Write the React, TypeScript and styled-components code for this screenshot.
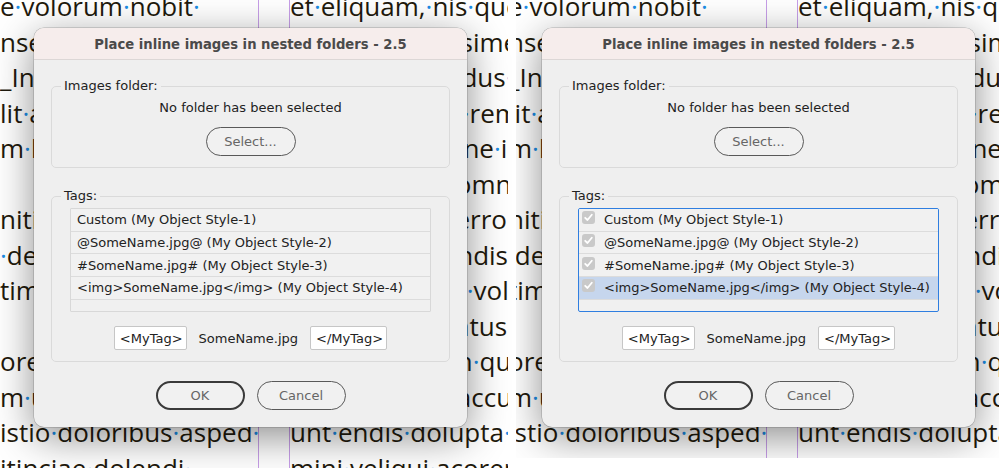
import React from "react";
import styled, { createGlobalStyle } from "styled-components";

const GlobalStyle = createGlobalStyle`
  html, body { margin: 0; padding: 0; background: #fff; }
  body { width: 999px; height: 468px; overflow: hidden; }
`;

// text of the InDesign page behind the dialog; "·" is the visible space marker
const LEFT_LINES = [
  "e·volorum·nobit·",
  "nsequi·dolor·sit·amet·quo",
  "_Intiam·quibus·est·aut",
  "lit·aut·verum·quatem",
  "m·hicium·fuga·nem·est",
  "",
  "niti_tatem·venit·aut",
  "·delenis·eos·magnam",
  "tim·quam·rerum·aut",
  "",
  "orepedi·omnis·etur",
  "m·ut·aut·volorem·sit",
  "istio·doloribus·asped·",
  "itinciae·dolendi·",
];

const RIGHT_LINES = [
  "et·eliquam,·nis·que·non",
  "ut·quatur·eos·simenis·aut",
  "aut·eatur·mol·dus·que",
  "nam·quis·dolo·rem·alit",
  "unsitatur·ipsa·ne·in·rem",
  "estio·dolupta·omnimus",
  "ipsum·quiam·erro·tem",
  "moles·et·vollendis·aut",
  "nimus·sit·quos·volor",
  "odios·omnis·ratus·et",
  "set·aut·quidem·quam·et",
  "nam·esto·tim·accum",
  "unt·endis·dolupta·tem",
  "mini·veliqui·acorem",
];

const TAGS = [
  "Custom (My Object Style-1)",
  "@SomeName.jpg@ (My Object Style-2)",
  "#SomeName.jpg# (My Object Style-3)",
  "<img>SomeName.jpg</img> (My Object Style-4)",
];

const Stage = styled.div`
  display: flex;
  align-items: flex-start;
  width: 999px;
  height: 468px;
  background: #fff;
  overflow: hidden;
`;

const Shot = styled.div<{ $w: number; $h: number }>`
  flex: 0 0 ${(p) => p.$w}px;
  height: ${(p) => p.$h}px;
  overflow: hidden;
`;

const Scene = styled.div<{ $shift: number }>`
  position: relative;
  width: 516px;
  height: 468px;
  margin-left: -${(p) => p.$shift}px;
  background: #fff;
`;

const DocPage = styled.div`
  display: flex;
  height: 100%;
  font-family: "Open Sans", "Noto Sans", sans-serif;
  font-size: 26px;
  line-height: 35.5px;
  color: #1f1a0d;
`;

const TextFrame = styled.div<{ $w: number }>`
  flex: 0 0 ${(p) => p.$w}px;
  overflow: hidden;
  white-space: pre;
`;

const Lines = styled.div`
  margin-top: -11px;
`;

const Line = styled.div`
  height: 35.5px;
`;

const Space = styled.span`
  color: #1b8de6;
`;

const Gutter = styled.div`
  flex: 0 0 32px;
  box-sizing: border-box;
  border-left: 1px solid #c79ee8;
  border-right: 1px solid #c79ee8;
`;

const Dialog = styled.div`
  position: absolute;
  left: 34px;
  top: 28px;
  width: 433px;
  height: 399px;
  box-sizing: border-box;
  display: flex;
  flex-direction: column;
  border-radius: 10px;
  overflow: hidden;
  background: #efefef;
  box-shadow: 0 0 0 0.5px rgba(0, 0, 0, 0.25), 0 10px 40px rgba(0, 0, 0, 0.45);
  font-family: "DejaVu Sans", Verdana, sans-serif;
  font-size: 13px;
  color: #222;
`;

const TitleBar = styled.div`
  flex: none;
  height: 32px;
  box-sizing: border-box;
  display: flex;
  align-items: center;
  justify-content: center;
  padding-top: 1px;
  background: #f6edec;
  border-bottom: 1px solid #dcd7d6;
  font-size: 13.2px;
  font-weight: 700;
  color: #4a4a4a;
`;

const Body = styled.div`
  display: flex;
  flex-direction: column;
  padding: 26px 17px 17px;
`;

const Group = styled.div<{ $gapTop?: number }>`
  position: relative;
  display: flex;
  flex-direction: column;
  align-items: center;
  padding: 11px 18px;
  margin-top: ${(p) => p.$gapTop ?? 0}px;
  border: 1px solid #dadada;
  border-radius: 5px;
`;

const GroupLabel = styled.div`
  position: absolute;
  top: -9px;
  left: 9px;
  padding: 0 3px;
  line-height: 16px;
  background: #efefef;
  color: #222;
`;

const Message = styled.div`
  line-height: 18px;
  margin-top: 1px;
  margin-bottom: 10px;
`;

const Pill = styled.button<{ $default?: boolean; $w?: number }>`
  width: ${(p) => p.$w ?? 89}px;
  height: 29px;
  box-sizing: border-box;
  border-radius: 15px;
  border: ${(p) => (p.$default ? "2.5px solid #3a3a3a" : "1.5px solid #595959")};
  background: #f1f1f1;
  font-family: inherit;
  font-size: 13px;
  color: #666;
  padding: 0;
`;

const TagList = styled.div<{ $focused: boolean }>`
  align-self: stretch;
  height: 104px;
  box-sizing: border-box;
  border: ${(p) => (p.$focused ? "1.5px solid #2f7ee0" : "1px solid #d8d8d8")};
  border-radius: ${(p) => (p.$focused ? 2 : 1)}px;
  background: #f0f0f0;
  overflow: hidden;
`;

const TagRow = styled.div<{ $selected: boolean; $checks: boolean }>`
  display: flex;
  align-items: center;
  gap: 9px;
  height: 22.7px;
  box-sizing: border-box;
  padding-left: ${(p) => (p.$checks ? 3 : 6)}px;
  border-bottom: 1px solid #dcdcdc;
  background: ${(p) => (p.$selected ? "#c6d6ed" : "#f1f1f1")};
  white-space: nowrap;
`;

const Check = styled.span`
  flex: none;
  display: flex;
  width: 13px;
  height: 13px;
  margin-bottom: 4px;
  border-radius: 3px;
  background: #c9c9c9;
`;

const TagPreview = styled.div`
  display: flex;
  align-items: center;
  gap: 12px;
  margin-top: 14px;
`;

const TagBox = styled.div`
  height: 24px;
  box-sizing: border-box;
  display: flex;
  align-items: center;
  padding: 0 3px 0 5px;
  background: #fff;
  border: 1px solid #c6c6c6;
  border-radius: 2px;
`;

const Buttons = styled.div`
  display: flex;
  justify-content: center;
  gap: 12px;
  margin-top: 19px;
`;

function marked(text: string) {
  return text.split("·").map((word, i) => (
    <React.Fragment key={i}>
      {i > 0 && <Space>·</Space>}
      {word}
    </React.Fragment>
  ));
}

function CheckMark() {
  return (
    <Check>
      <svg width="13" height="13" viewBox="0 0 13 13">
        <path d="M3.2 6.8 L5.5 9 L9.8 3.8" fill="none" stroke="#fff" strokeWidth="1.8" strokeLinecap="round" strokeLinejoin="round" />
      </svg>
    </Check>
  );
}

function PlaceDialog({ focused }: { focused: boolean }) {
  return (
    <Dialog>
      <TitleBar>Place inline images in nested folders - 2.5</TitleBar>
      <Body>
        <Group>
          <GroupLabel>Images folder:</GroupLabel>
          <Message>No folder has been selected</Message>
          <Pill $w={90}>Select...</Pill>
        </Group>
        <Group $gapTop={28}>
          <GroupLabel>Tags:</GroupLabel>
          <TagList $focused={focused}>
            {TAGS.map((t, i) => (
              <TagRow key={t} $checks={focused} $selected={focused && i === TAGS.length - 1}>
                {focused && <CheckMark />}
                {t}
              </TagRow>
            ))}
          </TagList>
          <TagPreview>
            <TagBox>&lt;MyTag&gt;</TagBox>
            <span>SomeName.jpg</span>
            <TagBox>&lt;/MyTag&gt;</TagBox>
          </TagPreview>
        </Group>
        <Buttons>
          <Pill $default>OK</Pill>
          <Pill>Cancel</Pill>
        </Buttons>
      </Body>
    </Dialog>
  );
}

function InDesignView({ shift, focused }: { shift: number; focused: boolean }) {
  return (
    <Scene $shift={shift}>
      <DocPage>
        <TextFrame $w={258}>
          <Lines>
            {LEFT_LINES.map((l, i) => (
              <Line key={i}>{marked(l)}</Line>
            ))}
          </Lines>
        </TextFrame>
        <Gutter />
        <TextFrame $w={218}>
          <Lines>
            {RIGHT_LINES.map((l, i) => (
              <Line key={i}>{marked(l)}</Line>
            ))}
          </Lines>
        </TextFrame>
      </DocPage>
      <PlaceDialog focused={focused} />
    </Scene>
  );
}

export default function App() {
  return (
    <>
      <GlobalStyle />
      <Stage>
        <Shot $w={516} $h={468}>
          <InDesignView shift={0} focused={false} />
        </Shot>
        <Shot $w={483} $h={458}>
          <InDesignView shift={8} focused={true} />
        </Shot>
      </Stage>
    </>
  );
}
